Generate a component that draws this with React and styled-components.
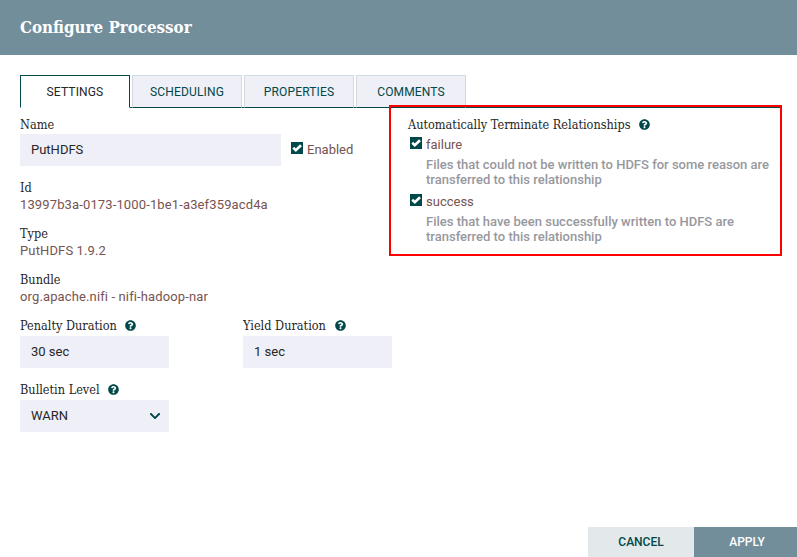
import styled, { createGlobalStyle } from 'styled-components'
import { FaQuestionCircle, FaChevronDown } from 'react-icons/fa'

const GlobalStyle = createGlobalStyle`
  html, body { margin: 0; padding: 0; background: #fff; }
  body { font-family: Roboto, sans-serif; overflow: hidden; }
`;

const slab = `"DejaVu Serif Condensed", "DejaVu Serif", serif`;

function Check() {
  return (
    <CheckBox viewBox="0 0 12 12">
      <rect width="12" height="12" fill="#004849" />
      <path d="M2.2 5.8 L4.8 8.2 L10 3.2" fill="none" stroke="#fff" strokeWidth="2.6" />
    </CheckBox>
  );
}

function Help() {
  return <HelpIcon><FaQuestionCircle /></HelpIcon>;
}

const tabs = ['SETTINGS', 'SCHEDULING', 'PROPERTIES', 'COMMENTS'];

const relationships = [
  { name: 'failure', text: 'Files that could not be written to HDFS for some reason are transferred to this relationship' },
  { name: 'success', text: 'Files that have been successfully written to HDFS are transferred to this relationship' },
];

export default function App() {
  return (
    <Dialog>
      <GlobalStyle />
      <Header>Configure Processor</Header>
      <TabBar>
        {tabs.map((t, i) => <Tab key={t} $active={i === 0}>{t}</Tab>)}
      </TabBar>
      <Body>
        <LeftColumn>
          <Label>Name</Label>
          <NameRow>
            <Input $wide>PutHDFS</Input>
            <Check />
            <Enabled>Enabled</Enabled>
          </NameRow>
          <Static $first>
            <Label>Id</Label>
            <Value>13997b3a-0173-1000-1be1-a3ef359acd4a</Value>
          </Static>
          <Static>
            <Label>Type</Label>
            <Value>PutHDFS 1.9.2</Value>
          </Static>
          <Static>
            <Label>Bundle</Label>
            <Value>org.apache.nifi - nifi-hadoop-nar</Value>
          </Static>
          <Durations>
            <div>
              <FieldLabel>Penalty Duration <Help /></FieldLabel>
              <Input>30 sec</Input>
            </div>
            <div>
              <FieldLabel>Yield Duration <Help /></FieldLabel>
              <Input>1 sec</Input>
            </div>
          </Durations>
          <Bulletin>
            <FieldLabel>Bulletin Level <Help /></FieldLabel>
            <Select>WARN<FaChevronDown /></Select>
          </Bulletin>
        </LeftColumn>
        <RightColumn>
          <Label>Automatically Terminate Relationships <Help /></Label>
          {relationships.map((r) => (
            <Relationship key={r.name}>
              <RelName><Check />{r.name}</RelName>
              <RelText>{r.text}</RelText>
            </Relationship>
          ))}
          <Highlight />
        </RightColumn>
      </Body>
      <Footer>
        <Button>CANCEL</Button>
        <Button $primary>APPLY</Button>
      </Footer>
    </Dialog>
  );
}

const Dialog = styled.div`
  width: 797px;
  height: 557px;
  display: flex;
  flex-direction: column;
  position: relative;
`;

const Header = styled.div`
  height: 55px;
  background: #728e9b;
  color: #fff;
  font-family: ${slab};
  font-weight: 700;
  font-size: 16.8px;
  line-height: 55px;
  padding-left: 20px;
`;

const TabBar = styled.div`
  display: flex;
  gap: 2px;
  margin: 20px 17px 0 20px;
  height: 33px;
  border-bottom: 1px solid #004849;
  box-sizing: border-box;
`;

const Tab = styled.div`
  width: 110px;
  height: 33px;
  box-sizing: border-box;
  text-align: center;
  font-size: 12px;
  font-weight: 400;
  letter-spacing: 0.15px;
  line-height: 32px;
  color: ${(p) => (p.$active ? '#262626' : '#004849')};
  background: ${(p) => (p.$active ? '#fff' : '#eeeff7')};
  border: 1px solid ${(p) => (p.$active ? '#004849' : '#cfdbe0')};
  border-bottom: ${(p) => (p.$active ? '1px solid #fff' : '1px solid #004849')};
`;

const Body = styled.div`
  flex: 1;
  display: grid;
  grid-template-columns: 388px 1fr;
  padding-left: 20px;
`;

const LeftColumn = styled.div`
  display: flex;
  flex-direction: column;
  padding-top: 9px;
`;

const RightColumn = styled.div`
  position: relative;
  padding-top: 9px;
`;

const Label = styled.div`
  font-family: ${slab};
  font-size: 12.6px;
  line-height: 16px;
  color: #262626;
`;

const FieldLabel = styled(Label)`
  margin-bottom: 2px;
`;

const NameRow = styled.div`
  display: flex;
  align-items: center;
  margin-top: 1px;
  height: 32px;

  svg { margin-bottom: 4px; }
`;

const Input = styled.div`
  width: ${(p) => (p.$wide ? '261px' : '149px')};
  height: 32px;
  margin-right: ${(p) => (p.$wide ? '10px' : '0')};
  box-sizing: border-box;
  background: #eeeff7;
  color: #262626;
  font-size: 13px;
  line-height: 32px;
  padding-left: 11px;
`;

const CheckBox = styled.svg`
  width: 12px;
  height: 12px;
  flex-shrink: 0;
`;

const Enabled = styled.span`
  margin-left: 4px;
  font-size: 13px;
  line-height: 34px;
  color: #775351;
`;

const Static = styled.div`
  margin-top: ${(p) => (p.$first ? '14px' : '13px')};
`;

const Value = styled.div`
  font-size: 13px;
  line-height: 17px;
  letter-spacing: 0.13px;
  color: #775351;
`;

const Durations = styled.div`
  display: grid;
  grid-template-columns: 223px 149px;
  margin-top: 13px;
`;

const Bulletin = styled.div`
  margin-top: 14px;
`;

const Select = styled.div`
  width: 149px;
  height: 32px;
  box-sizing: border-box;
  background: #eeeff7;
  color: #262626;
  font-size: 13px;
  line-height: 32px;
  padding: 0 8px 0 11px;
  display: flex;
  justify-content: space-between;
  align-items: center;

  svg { color: #004849; font-size: 12px; }
`;

const HelpIcon = styled.span`
  display: inline-block;
  margin-left: 5px;
  font-size: 11px;
  line-height: 1;
  color: #004849;
  vertical-align: -1px;
`;

const Relationship = styled.div`
  margin-top: 4px;
  padding-left: 2px;

  & + & { margin-top: 7px; }
`;

const RelName = styled.div`
  display: flex;
  align-items: flex-start;
  gap: 4px;
  font-size: 13px;
  line-height: 16px;
  color: #775351;
`;

const RelText = styled.div`
  margin: 4px 0 0 16px;
  width: 350px;
  font-size: 13px;
  font-weight: 500;
  line-height: 15px;
  color: #97989e;
`;

const Highlight = styled.div`
  position: absolute;
  left: -19px;
  top: -3px;
  width: 393px;
  height: 151px;
  box-sizing: border-box;
  border: 2px solid #f00;
`;

const Footer = styled.div`
  display: flex;
  justify-content: flex-end;
`;

const Button = styled.div`
  width: ${(p) => (p.$primary ? '100px' : '106px')};
  height: 30px;
  text-align: center;
  line-height: 30px;
  font-size: 12px;
  font-weight: 500;
  padding-left: ${(p) => (p.$primary ? '3px' : '0')};
  color: ${(p) => (p.$primary ? '#fff' : '#004849')};
  background: ${(p) => (p.$primary ? '#728e9b' : '#e3e8eb')};
`;
